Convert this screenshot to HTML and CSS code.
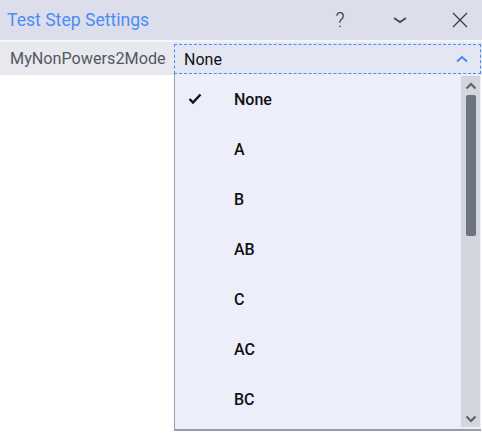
FILE: index.html
```html
<!DOCTYPE html>
<html>
<head>
<meta charset="utf-8">
<link rel="stylesheet" href="styles.css">
</head>
<body>
<div class="window">
  <div class="titlebar">
    <div class="title">Test Step Settings</div>
    <div class="tools">
      <span class="tool help">?</span>
      <span class="tool">
        <svg width="16" height="10" viewBox="0 0 16 10"><path d="M2 3 L8 7 L14 3" fill="none" stroke="#4a4c55" stroke-width="2"/></svg>
      </span>
      <span class="tool">
        <svg width="18" height="18" viewBox="0 0 18 18"><path d="M2 2 L16 16 M16 2 L2 16" fill="none" stroke="#3a3c44" stroke-width="1.3"/></svg>
      </span>
    </div>
  </div>
  <div class="row">
    <div class="label">MyNonPowers2Mode</div>
    <div class="combo">
      <span class="value">None</span>
      <svg class="caret" width="12" height="8" viewBox="0 0 12 8"><path d="M1 6.5 L6 2 L11 6.5" fill="none" stroke="#3d86f0" stroke-width="1.8"/></svg>
    </div>
  </div>
  <div class="body"></div>
  <div class="dropdown">
    <div class="list">
      <div class="item"><span class="check">
        <svg width="14" height="12" viewBox="0 0 14 12"><path d="M1.5 6 L5 9.5 L12.5 1.5" fill="none" stroke="#111" stroke-width="2.4"/></svg>
      </span><span class="text">None</span></div>
      <div class="item"><span class="check"></span><span class="text">A</span></div>
      <div class="item"><span class="check"></span><span class="text">B</span></div>
      <div class="item"><span class="check"></span><span class="text">AB</span></div>
      <div class="item"><span class="check"></span><span class="text">C</span></div>
      <div class="item"><span class="check"></span><span class="text">AC</span></div>
      <div class="item"><span class="check"></span><span class="text">BC</span></div>
    </div>
    <div class="scrollbar">
      <svg class="arrow" width="12" height="8" viewBox="0 0 12 8"><path d="M1.5 6.5 L6 2 L10.5 6.5" fill="none" stroke="#5b5e68" stroke-width="2"/></svg>
      <div class="track"><div class="thumb"></div></div>
      <svg class="arrow" width="12" height="8" viewBox="0 0 12 8"><path d="M1.5 1.5 L6 6 L10.5 1.5" fill="none" stroke="#5b5e68" stroke-width="2"/></svg>
    </div>
  </div>
</div>
</body>
</html>
```

FILE: styles.css
```css
html, body {
  margin: 0;
  padding: 0;
  background: #ffffff;
  font-family: Roboto, "Liberation Sans", sans-serif;
}
.window {
  position: relative;
  width: 482px;
  height: 433px;
  display: flex;
  flex-direction: column;
  background: #ffffff;
  overflow: hidden;
}
.titlebar {
  background: #dcdfeb;
  display: flex;
  align-items: center;
  justify-content: space-between;
  padding-left: 7px;
  box-sizing: border-box;
  border-bottom: 2px solid #f4f5f9;
  height: 42px;
}
.title {
  color: #4b8cf5;
  font-size: 17.6px;
}
.tools {
  display: flex;
  align-items: center;
  height: 100%;
  gap: 16px;
}
.tool {
  width: 44px;
  display: flex;
  align-items: center;
  justify-content: center;
}
.tool.help {
  font-size: 20px;
  font-weight: 300;
  color: #2c2e35;
}
.row {
  height: 33px;
  background: #e8e9ef;
  display: flex;
  align-items: stretch;
}
.label {
  width: 164px;
  padding-left: 10px;
  color: #555861;
  font-size: 16.2px;
  display: flex;
  align-items: center;
}
.combo {
  flex: 1;
  margin: 2px 1px 1px 0;
  border: 1px dashed #4b8cf5;
  background: #e4e7f3;
  display: flex;
  align-items: center;
  justify-content: space-between;
  padding: 0 12px 0 9px;
}
.value {
  font-size: 16px;
  color: #111111;
}
.body {
  flex: 1;
}
.dropdown {
  position: absolute;
  left: 174px;
  top: 74px;
  width: 307px;
  height: 357px;
  background: #eceef9;
  border-left: 1px solid #9a9caa;
  border-bottom: 2px solid #9a9caa;
  box-sizing: border-box;
  display: flex;
}
.list {
  flex: 1;
  display: flex;
  flex-direction: column;
  overflow: hidden;
}
.item {
  height: 50px;
  flex: none;
  display: flex;
  align-items: center;
  font-size: 16px;
  font-weight: 500;
  color: #111111;
}
.check {
  width: 59px;
  box-sizing: border-box;
  padding-left: 13px;
  display: flex;
  align-items: center;
}
.scrollbar {
  width: 19px;
  margin: 2px 1px 2px 0;
  background: #d3d5df;
  display: flex;
  flex-direction: column;
  align-items: center;
  padding: 6px 0 4px;
  box-sizing: border-box;
}
.arrow {
  flex: none;
}
.track {
  flex: 1;
  width: 100%;
  padding: 5px 0;
  display: flex;
  justify-content: center;
}
.thumb {
  width: 10px;
  height: 141px;
  background: #6e7380;
  border-radius: 2px;
}
```
